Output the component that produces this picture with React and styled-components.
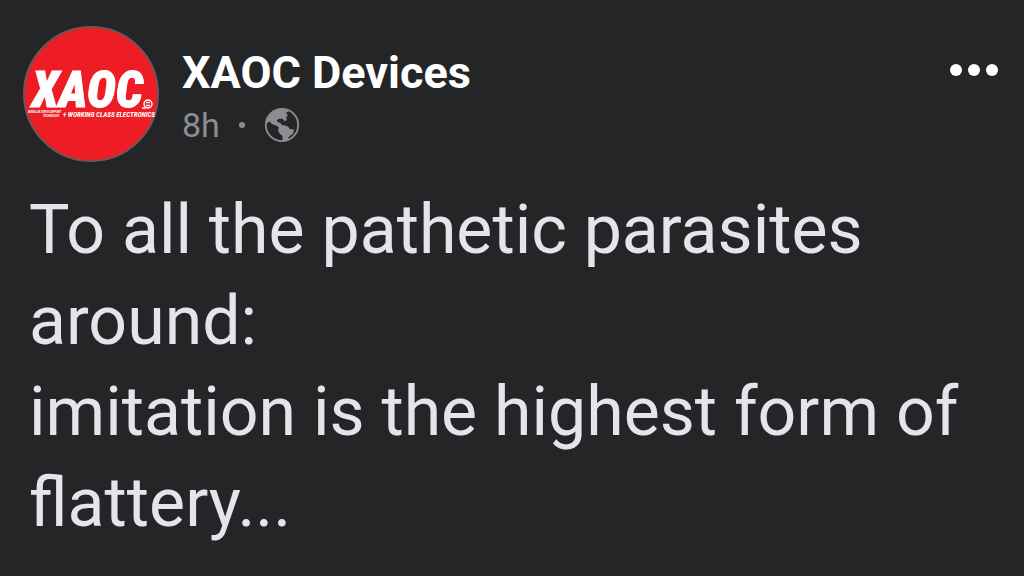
import React from 'react';
import styled, { createGlobalStyle } from 'styled-components';

const GlobalStyle = createGlobalStyle`
    * {
        box-sizing: border-box;
    }
    body {
        margin: 0;
        background: #242527;
        font-family: Roboto, 'Liberation Sans', sans-serif;
    }
`;

const Logo = () => (
    <LogoSvg viewBox="0 0 136 136" role="img" aria-label="XAOC Devices logo">
        <circle cx="68" cy="68" r="67" fill="#ee1c25" stroke="#6f5558" strokeWidth="2" />
        <LogoWord x="9" y="81">
            XAOC
        </LogoWord>
        <LogoSmall x="5" y="87">
            MODULAR SYNTH SUPPORT
        </LogoSmall>
        <LogoSmall x="20" y="91">
            TECHNOLOGY
        </LogoSmall>
        <LogoTagline x="40" y="91">
            + WORKING CLASS ELECTRONICS
        </LogoTagline>
        <g fill="none" stroke="#fff">
            <circle cx="125" cy="78" r="4" strokeWidth="1.4" />
            <path d="M123 76.5h4M123 79.5h4M119 82h4" strokeWidth="1.3" />
        </g>
    </LogoSvg>
);

const Globe = () => (
    <GlobeSvg viewBox="0 0 36 36" role="img" aria-label="Public">
        <circle cx="18" cy="18" r="16.2" fill="none" stroke="currentColor" strokeWidth="1.8" />
        <path
            fill="currentColor"
            d="M2 17C3 9 9 3 17 2C20 2 23 3 25 4L22 6L24 8.5L22 10L23 12L21 14.5L19.5 13L18 11.5L14 12L13 14L14 15.5L16 15.5L18 18L21 18.5L24 19.5L26 22L30 22.5L29 27L25.5 29L23 34L18.500 34L18.500 29L15.500 26.500L14 23L15 20.500L12 18.500L8 17L5.500 14.500Z"
        />
    </GlobeSvg>
);

const App = () => (
    <>
        <GlobalStyle />
        <Post>
            <Header>
                <Logo />
                <Author>
                    <Name href="#">XAOC Devices</Name>
                    <Meta>
                        <span>8h</span>
                        <Dot />
                        <Globe />
                    </Meta>
                </Author>
                <MoreButton type="button" aria-label="More options">
                    <i />
                    <i />
                    <i />
                </MoreButton>
            </Header>
            <Message>
                To all the pathetic parasites around:
                <br />
                imitation is the highest form of flattery...
            </Message>
        </Post>
    </>
);

export default App;

const Post = styled.article`
    padding: 26px 26px 0 23px;
`;

const Header = styled.header`
    display: flex;
    align-items: flex-start;
`;

const LogoSvg = styled.svg`
    flex: none;
    width: 136px;
    height: 136px;
`;

const LogoWord = styled.text`
    fill: #fff;
    stroke: #fff;
    stroke-width: 1px;
    font: italic 900 49px 'Roboto Condensed', Roboto, sans-serif;
`;

const LogoTagline = styled.text`
    fill: #fff;
    font: italic 700 7px 'Roboto Condensed', Roboto, sans-serif;
`;

const LogoSmall = styled.text`
    fill: #fff;
    font: italic 700 3px 'Roboto Condensed', Roboto, sans-serif;
`;

const Author = styled.div`
    flex: 1;
    padding: 20px 0 0 23px;
`;

const Name = styled.a`
    display: block;
    color: #fff;
    font-size: 45px;
    font-weight: 700;
    line-height: 54px;
    text-decoration: none;
`;

const Meta = styled.div`
    display: flex;
    align-items: center;
    color: #8c8d91;
    font-size: 34px;
    line-height: 50px;
`;

const Dot = styled.i`
    width: 6px;
    height: 6px;
    margin: 0 19px;
    border-radius: 50%;
    background: currentColor;
`;

const GlobeSvg = styled.svg`
    width: 36px;
    height: 36px;
`;

const MoreButton = styled.button`
    display: flex;
    gap: 6px;
    margin-top: 32px;
    padding: 6px 0;
    border: 0;
    background: none;
    cursor: pointer;
    i {
        width: 12px;
        height: 12px;
        border-radius: 50%;
        background: #fff;
    }
`;

const Message = styled.p`
    margin: 23px 0 0;
    padding-left: 6px;
    color: #e4e5ea;
    font-size: 68px;
    line-height: 91px;
`;
